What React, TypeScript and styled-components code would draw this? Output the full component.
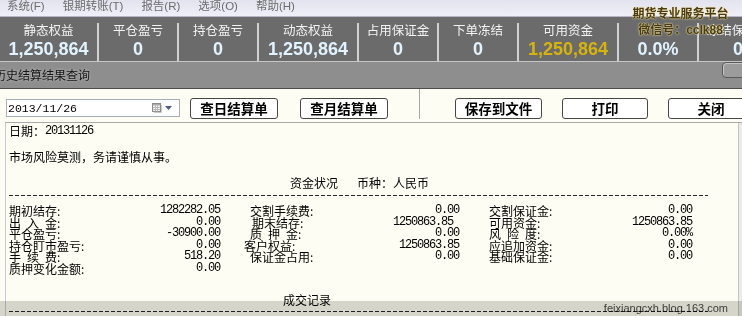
import React from 'react';
import styled, { createGlobalStyle } from 'styled-components';

const GlobalStyle = createGlobalStyle`
	html, body {
		margin: 0;
		padding: 0;
		background: #fdfdf3;
	}
	body {
		font-family: "Noto Sans CJK SC", "Liberation Sans", sans-serif;
	}
`;

interface Stat {
	label: string;
	value: string;
	width: number;
	gold?: boolean;
}

const stats: Stat[] = [
	{ label: '静态权益', value: '1,250,864', width: 97 },
	{ label: '平仓盈亏', value: '0', width: 80 },
	{ label: '持仓盈亏', value: '0', width: 80 },
	{ label: '动态权益', value: '1,250,864', width: 100 },
	{ label: '占用保证金', value: '0', width: 80 },
	{ label: '下单冻结', value: '0', width: 80 },
	{ label: '可用资金', value: '1,250,864', width: 100, gold: true },
	{ label: '\u00a0', value: '0.0%', width: 80 },
	{ label: '冻结保证金', value: '0', width: 80 }
];

const menus = ['系统(F)', '银期转账(T)', '报告(R)', '选项(O)', '帮助(H)'];

// label, value, label, value, label, value
const fundRows: string[][] = [
	['期初结存:', '1282282.05', '交割手续费:', '0.00', '交割保证金:', '0.00'],
	['出\u2002入\u2002金:', '0.00', '期末结存:', '1250863.85 ', '可用资金:', '1250863.85'],
	['平仓盈亏:', '-30900.00', '质\u2002押\u2002金:', '0.00', '风\u2002险\u2002度:', '0.00%'],
	['持仓盯市盈亏:', '0.00', '客户权益:', '1250863.85', '应追加资金:', '0.00'],
	['手\u2002续\u2002费:', '518.20', '保证金占用:', '0.00', '基础保证金:', '0.00'],
	['质押变化金额:', '0.00']
];

const Screen = styled.div`
	position: relative;
	width: 742px;
	height: 316px;
	overflow: hidden;
	display: flex;
	flex-direction: column;
	background: #fdfdf3;
`;

const MenuBar = styled.div`
	display: flex;
	gap: 18px;
	height: 16px;
	flex-shrink: 0;
	padding-left: 7px;
	background: linear-gradient(#e3e3ef, #efeff8);
	border-bottom: 1px solid #b6b6c6;
	font-family: "Liberation Sans", "Noto Sans CJK SC", sans-serif;
	font-size: 11.5px;
	line-height: 12px;
	color: #6c6c6c;
`;

const MenuItem = styled.span`
	white-space: nowrap;
`;

const Brand = styled.div`
	position: absolute;
	top: 6px;
	left: 632px;
	width: 97px;
	text-align: center;
	font-family: "Liberation Sans", "Noto Sans CJK SC", sans-serif;
	font-weight: bold;
	font-size: 12px;
	line-height: 16px;
	color: #4a3c12;
	text-shadow: 0 0 2px #f1e3a2, 0 0 1px #f1e3a2;
	white-space: nowrap;
`;

const StatsBar = styled.div`
	display: flex;
	height: 44px;
	flex-shrink: 0;
	box-sizing: border-box;
	padding-top: 6px;
	background: #6b6b6b;
`;

const StatCol = styled.div<{ $w: number; $first: boolean }>`
	width: ${p => p.$w}px;
	flex-shrink: 0;
	box-sizing: border-box;
	border-left: ${p => (p.$first ? 'none' : '2px solid #d0d0d0')};
	display: flex;
	flex-direction: column;
	align-items: center;
	white-space: nowrap;
`;

const StatLabel = styled.div`
	font-size: 12.5px;
	line-height: 13px;
	color: #f3f3f3;
`;

const StatValue = styled.div<{ $gold?: boolean }>`
	margin-top: 2px;
	font-family: "Liberation Sans", sans-serif;
	font-weight: bold;
	font-size: 18px;
	line-height: 22px;
	color: ${p => (p.$gold ? '#d6b40c' : '#e0f3ff')};
`;

const TitleBar = styled.div`
	display: flex;
	align-items: flex-start;
	height: 28px;
	flex-shrink: 0;
	box-sizing: border-box;
	background: #8e8e8e;
	border-top: 1px solid #c6c6c6;
	border-bottom: 1px solid #4c4c4c;
`;

const TitleText = styled.div`
	margin: 6px 0 0 -6px;
	font-size: 12px;
	line-height: 14px;
	color: #151515;
	text-shadow: 0 0 3px rgba(255, 255, 255, 0.5);
	white-space: nowrap;
`;

const TabStub = styled.div`
	margin: 0 -6px 0 auto;
	width: 26px;
	height: 16px;
	flex-shrink: 0;
	box-sizing: border-box;
	border: 1px solid #5a5a5a;
	border-radius: 4px 0 0 4px;
	background: #9c9c9c;
	box-shadow: inset 1px 1px #c4c4c4;
`;

const Toolbar = styled.div`
	display: flex;
	align-items: flex-start;
	height: 33px;
	flex-shrink: 0;
	box-sizing: border-box;
	padding-left: 6px;
`;

const DateBox = styled.div`
	margin-top: 10px;
	width: 174px;
	height: 18px;
	flex-shrink: 0;
	box-sizing: border-box;
	display: flex;
	align-items: center;
	padding: 0 7px 0 1px;
	border: 1px solid #a7afbb;
	background: #fff;
	font-family: "Liberation Mono", monospace;
	font-size: 11.5px;
	color: #000;
`;

const DateIcons = styled.div`
	margin-left: auto;
	display: flex;
	align-items: center;
	gap: 3px;
`;

const Btn = styled.button<{ $ml: number; $w: number }>`
	margin: 9px 0 0 ${p => p.$ml}px;
	width: ${p => p.$w}px;
	height: 21px;
	flex-shrink: 0;
	padding: 0;
	border: 1px solid #474747;
	border-radius: 3px;
	background: #fff;
	font-family: "Noto Sans CJK SC", sans-serif;
	font-weight: bold;
	font-size: 13.5px;
	line-height: 19px;
	color: #000;
`;

const VSep = styled.div<{ $ml: number }>`
	margin-left: ${p => p.$ml}px;
	width: 1px;
	height: 30px;
	flex-shrink: 0;
	background: #a6a6a6;
`;

const Report = styled.div`
	flex: 1;
	min-height: 0;
	display: flex;
	margin-left: 5px;
	border-top: 1px solid #a9a9a9;
	border-left: 1px solid #c8c8d6;
`;

const Sheet = styled.div`
	flex: 1;
	overflow: hidden;
	padding: 2px 0 0 3px;
	font-family: "Noto Sans CJK SC", sans-serif;
	font-size: 12px;
	color: #000;
`;

const ScrollTrack = styled.div`
	width: 3px;
	flex-shrink: 0;
	background: #ebebeb;
	border-left: 1px solid #c4c4c4;
`;

const Line = styled.div<{ $mt?: number; $indent?: number }>`
	display: flex;
	height: 12px;
	line-height: 12px;
	white-space: pre;
	margin-top: ${p => p.$mt ?? 0}px;
	padding-left: ${p => p.$indent ?? 0}px;
`;

const Mono = styled.span`
	font-family: "Liberation Mono", monospace;
	font-size: 12px;
	letter-spacing: -1.2px;
`;

const Gap = styled.span<{ $w: number }>`
	display: inline-block;
	width: ${p => p.$w}px;
`;

const DashRule = styled.div<{ $mt: number; $w: number }>`
	margin-top: ${p => p.$mt}px;
	width: ${p => p.$w}px;
	height: 1px;
	background: repeating-linear-gradient(90deg, #262626 0 4px, transparent 4px 6px);
`;

const FundGrid = styled.div`
	margin-top: 9px;
	display: grid;
	grid-template-columns: 141px 70px 170px 69px 161px 72px;
	grid-auto-rows: 11.6px;
	line-height: 11.6px;
`;

const Label = styled.div<{ $pad: number }>`
	padding-left: ${p => p.$pad}px;
	white-space: pre;
`;

const Num = styled.div`
	text-align: right;
	white-space: pre;
	font-family: "Liberation Mono", monospace;
	font-size: 12px;
	letter-spacing: -1.2px;
`;

const BlogMark = styled.div`
	position: absolute;
	left: 0;
	right: 0;
	bottom: 0;
	height: 15px;
	padding-right: 14px;
	background: #d7d7d3;
	mix-blend-mode: multiply;
	text-align: right;
	font-family: "Liberation Sans", sans-serif;
	font-size: 11px;
	line-height: 15px;
	color: #3c3c3c;
`;

const CalendarIcon = () => (
	<svg width="10" height="10" viewBox="0 0 10 10">
		<rect x="0.5" y="0.5" width="8" height="8" fill="#f2f2f2" stroke="#8c8c8c" />
		<rect x="1" y="1" width="7" height="1.5" fill="#a9a9a9" />
		<path d="M3.5 2.5V8.5M5.5 2.5V8.5M1 4.5H8M1 6.5H8" stroke="#b9b9b9" strokeWidth="1" />
		<path d="M9.5 2V9.5H2" fill="none" stroke="#c8c8c8" />
	</svg>
);

const DropArrow = () => (
	<svg width="7" height="4" viewBox="0 0 7 4">
		<polygon points="0,0 7,0 3.5,4" fill="#4e5c84" />
	</svg>
);

const labelPad = [0, 30, 30];
const labelShift: Record<string, number> = { '客户权益:': -6, '期末结存:': 2 };

const App = () => (
	<>
		<GlobalStyle />
		<Screen>
			<MenuBar>
				{menus.map(m => <MenuItem key={m}>{m}</MenuItem>)}
			</MenuBar>
			<StatsBar>
				{stats.map((s, i) => (
					<StatCol key={i} $w={s.width} $first={i === 0}>
						<StatLabel>{s.label}</StatLabel>
						<StatValue $gold={s.gold}>{s.value}</StatValue>
					</StatCol>
				))}
			</StatsBar>
			<TitleBar>
				<TitleText>历史结算结果查询</TitleText>
				<TabStub />
			</TitleBar>
			<Toolbar>
				<DateBox>
					2013/11/26
					<DateIcons>
						<CalendarIcon />
						<DropArrow />
					</DateIcons>
				</DateBox>
				<Btn $ml={10} $w={88}>查日结算单</Btn>
				<Btn $ml={22} $w={88}>查月结算单</Btn>
				<VSep $ml={31} />
				<Btn $ml={35} $w={87}>保存到文件</Btn>
				<Btn $ml={20} $w={86}>打印</Btn>
				<Btn $ml={20} $w={86}>关闭</Btn>
			</Toolbar>
			<Report>
				<Sheet>
					<Line>日期：<Mono>20131126</Mono></Line>
					<Line $mt={14}>市场风险莫测，务请谨慎从事。</Line>
					<Line $mt={14} $indent={281}>
						资金状况<Gap $w={19} />币种：人民币
					</Line>
					<DashRule $mt={6} $w={699} />
					<FundGrid>
						{fundRows.map((row, r) =>
							row.map((cell, c) =>
								c % 2 === 0
									? <Label key={`${r}-${c}`} $pad={labelPad[c / 2] + (labelShift[cell] ?? 0)}>{cell}</Label>
									: <Num key={`${r}-${c}`}>{cell}</Num>
							)
						)}
					</FundGrid>
					<Line $mt={19} $indent={274}>成交记录</Line>
					<DashRule $mt={5} $w={699} />
				</Sheet>
				<ScrollTrack />
			</Report>
			<Brand>
				期货专业服务平台
				<br />
				微信号：cclk88
			</Brand>
			<BlogMark>feixiangcxh.blog.163.com</BlogMark>
		</Screen>
	</>
);

export default App;
